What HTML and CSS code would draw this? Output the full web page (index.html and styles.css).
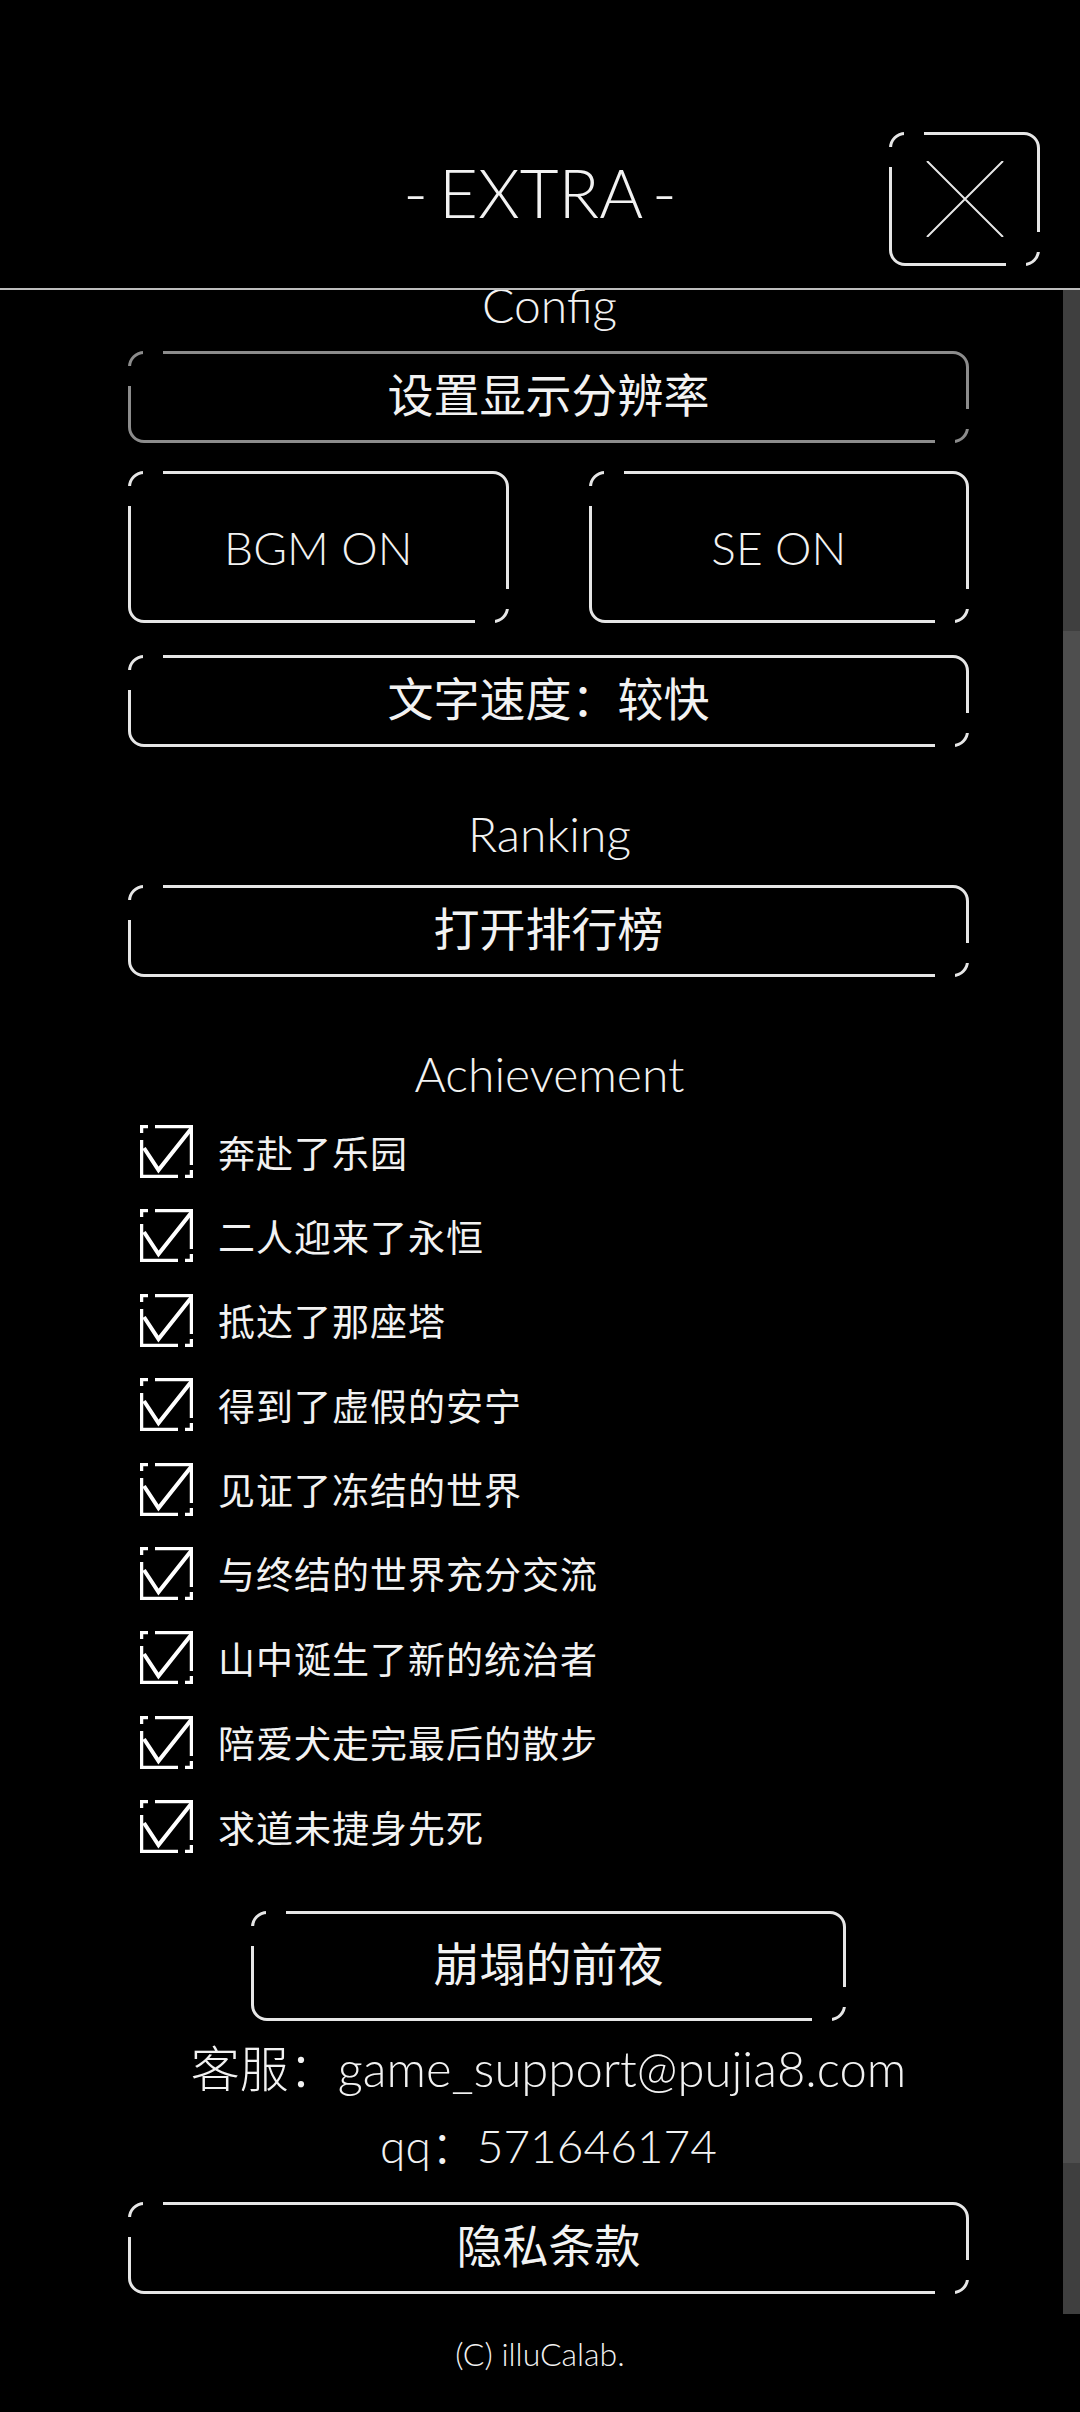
FILE: index.html
```html
<!DOCTYPE html>
<html lang="zh-CN">
<head>
    <meta charset="UTF-8">
    <title>EXTRA</title>
    <link rel="stylesheet" href="styles.css">
</head>
<body>
    <svg class="defs" width="0" height="0">
        <symbol id="chk" viewBox="0 0 53 53">
            <path d="M1.5 8V1.5H8M15 1.5H51.5V40M51.5 45V51.5H45M38 51.5H1.5V15" fill="none" stroke="#fff" stroke-width="3.5"/>
            <path d="M4 23L18.5 45L51 4" fill="none" stroke="#fff" stroke-width="4" stroke-linejoin="miter"/>
        </symbol>
    </svg>

    <div id="wrap">
        <div class="top">
            <h1 class="title">- EXTRA -</h1>
            <a href="javascript:void(0)" class="frame close">
                <svg width="78" height="76" viewBox="0 0 78 76">
                    <path d="M1 0L77 76M77 0L1 76" stroke="#e6e6e6" stroke-width="2"/>
                </svg>
            </a>
        </div>

        <div class="main">
            <div class="scroll">
                <h2 class="head head-config">Config</h2>
                <a href="javascript:void(0)" class="frame btn dim">设置显示分辨率</a>
                <div class="pair">
                    <a href="javascript:void(0)" class="frame btn tall">BGM ON</a>
                    <a href="javascript:void(0)" class="frame btn tall">SE ON</a>
                </div>
                <a href="javascript:void(0)" class="frame btn speed">文字速度：较快</a>

                <h2 class="head head-rank">Ranking</h2>
                <a href="javascript:void(0)" class="frame btn rank">打开排行榜</a>

                <h2 class="head head-achieve">Achievement</h2>
                <ul class="achieve">
                    <li><svg class="check"><use href="#chk"/></svg>奔赴了乐园</li>
                    <li><svg class="check"><use href="#chk"/></svg>二人迎来了永恒</li>
                    <li><svg class="check"><use href="#chk"/></svg>抵达了那座塔</li>
                    <li><svg class="check"><use href="#chk"/></svg>得到了虚假的安宁</li>
                    <li><svg class="check"><use href="#chk"/></svg>见证了冻结的世界</li>
                    <li><svg class="check"><use href="#chk"/></svg>与终结的世界充分交流</li>
                    <li><svg class="check"><use href="#chk"/></svg>山中诞生了新的统治者</li>
                    <li><svg class="check"><use href="#chk"/></svg>陪爱犬走完最后的散步</li>
                    <li><svg class="check"><use href="#chk"/></svg>求道未捷身先死</li>
                </ul>

                <a href="javascript:void(0)" class="frame btn night">崩塌的前夜</a>
                <p class="contact mail">客服：game_support@pujia8.com</p>
                <p class="contact qq">qq：571646174</p>
                <a href="javascript:void(0)" class="frame btn privacy">隐私条款</a>
            </div>
            <div class="bar"><div class="thumb"></div></div>
        </div>

        <div class="copy">(C) illuCalab.</div>
    </div>
</body>
</html>
```

FILE: styles.css
```css
*{margin: 0;padding: 0;box-sizing: border-box;}
a{text-decoration: none;color: #f2f2f2;}
ul,li{list-style: none;}
body{background: #000; color: #f2f2f2; font-family: "Lato", "Noto Sans CJK SC", sans-serif; font-weight: 300; overflow: hidden;}
.defs{position: absolute;}

#wrap{width: 1080px; height: 2412px; display: flex; flex-direction: column;}

/* header */
.top{height: 290px; border-bottom: 2px solid #bdbdbd; display: grid; grid-template-columns: 1fr auto 1fr; align-items: start;}
.title{grid-column: 2; margin-top: 151px; font-size: 67px; line-height: 82px; font-weight: 300; word-spacing: -7px; white-space: pre;}
.close{grid-column: 3; justify-self: end; margin: 132px 40px 0 0; width: 151px; height: 134px;}

/* broken-corner frame */
.frame{position: relative; display: flex; align-items: center; justify-content: center; border: 3px solid #e6e6e6; border-radius: 16px;}
.frame::before,.frame::after{content: ""; position: absolute; width: 20px; height: 20px; background: #000;}
.frame::before{left: 12px; top: -11px; box-shadow: -23px 23px 0 #000;}
.frame::after{right: 11px; bottom: -11px; box-shadow: 22px -22px 0 #000;}

/* scroll area */
.main{height: 2024px; display: flex;}
.scroll{flex: 1; height: 2024px; overflow: hidden; padding: 0 94px 0 128px; display: flex; flex-direction: column;}
.bar{width: 17px; background: #3f3f3f;}
.thumb{margin-top: 341px; height: 1532px; background: #4e4e4e;}

.head{font-size: 48px; line-height: 58px; height: 58px; font-weight: 300; text-align: center; padding-left: 2px;}
.head-config{margin-top: -14px;}
.head-rank{margin-top: 58px;}
.head-achieve{margin-top: 68px;}

.btn{height: 92px; padding-bottom: 10px; font-size: 46px; font-weight: 400; font-family: "Lato", "Noto Sans CJK SC", sans-serif;}
.btn.dim{margin-top: 17px; border-color: #8c8c8c;}
.pair{margin-top: 28px; display: flex; gap: 80px;}
.btn.tall{flex: 1; height: 152px; padding-bottom: 0; font-weight: 300;}
.btn.speed{margin-top: 32px;}
.btn.rank{margin-top: 22px;}

.achieve{margin-top: 22px; display: flex; flex-direction: column; gap: 31.4px; padding-left: 12px;}
.achieve li{height: 53px; display: flex; align-items: center; font-size: 37px; letter-spacing: 1px; font-family: "Noto Sans CJK SC", sans-serif; font-weight: 400;}
.check{width: 53px; height: 53px; margin-right: 25px; flex: none;}

.btn.night{margin-top: 58px; width: 595px; height: 110px; align-self: center;}
.contact{line-height: 60px; text-align: center; white-space: nowrap;}
.mail{margin-top: 17px; font-size: 49px;}
.qq{margin-top: 18px; font-size: 46px;}
.btn.privacy{margin-top: 26px;}

.copy{padding-top: 20px; font-size: 32px; line-height: 40px; text-align: center;}
```
